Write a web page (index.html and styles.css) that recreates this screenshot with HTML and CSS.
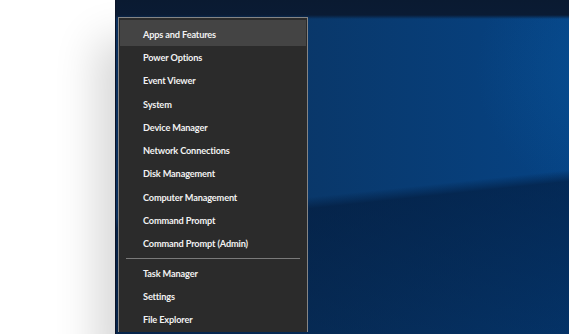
FILE: index.html
```html
<!DOCTYPE html>
<html lang="en">

<head>
    <meta charset="UTF-8">
    <meta name="viewport" content="width=device-width, initial-scale=1.0">
    <title>Quick Link Menu</title>
    <link rel="stylesheet" href="styles.css">
</head>

<body>
<div class="page">
    <!-- white area left of the screen -->
    <div class="gutter"></div>

    <!-- desktop with the Win+X menu -->
    <div class="desktop">
        <div class="menu">
            <ul class="group">
                <li class="item active">Apps and Features</li>
                <li class="item">Power Options</li>
                <li class="item">Event Viewer</li>
                <li class="item">System</li>
                <li class="item">Device Manager</li>
                <li class="item">Network Connections</li>
                <li class="item">Disk Management</li>
                <li class="item">Computer Management</li>
                <li class="item">Command Prompt</li>
                <li class="item">Command Prompt (Admin)</li>
            </ul>
            <div class="separator"></div>
            <ul class="group">
                <li class="item">Task Manager</li>
                <li class="item">Settings</li>
                <li class="item">File Explorer</li>
            </ul>
        </div>
    </div>
</div>
</body>

</html>
```

FILE: styles.css
```css
/* Basic page setup */
body {
    margin: 0;
    background-color: #fff;
    font-family: Lato, "Open Sans", sans-serif;
    overflow: hidden;
}

.page {
    display: flex;
    height: 334px;
}

.gutter {
    width: 115px;
    flex-shrink: 0;
}

.desktop {
    flex: 1;
    display: flex;
    align-items: flex-start;
    padding: 17px 0 0 2px;
    border-left: 1px solid #0b1428;
    background:
        linear-gradient(to bottom, #0a1a31 0px, #0a1b34 15px, rgba(10, 27, 52, 0) 19px),
        linear-gradient(174deg, rgba(0, 0, 0, 0) 0%, rgba(0, 0, 0, 0) 57%, rgba(2, 20, 48, 0.55) 60%, rgba(2, 20, 48, 0.35) 100%),
        radial-gradient(ellipse 160px 140px at 520px 70px, rgba(10, 90, 160, 0.5), rgba(10, 90, 160, 0)),
        linear-gradient(to right, #0a2f5c 0%, #09386b 45%, #064384 100%);
    box-shadow: -18px 40px 40px rgba(0, 0, 0, 0.16);
}

/* The menu itself */
.menu {
    width: 188px;
    background-color: #2b2b2b;
    border: 1px solid #858585;
    border-bottom: none;
    padding-top: 2px;
}

.group {
    list-style: none;
    margin: 0;
    padding: 0;
}

.item {
    height: 23.3px;
    line-height: 23.3px;
    padding-left: 24px;
    font-size: 9.2px;
    font-weight: 700;
    color: #f2f2f2;
    white-space: nowrap;
    letter-spacing: -0.15px;
}

.item.active {
    height: 26px;
    line-height: 29px;
    margin: 0 1px;
    padding-left: 23px;
    background-color: #444;
}

.separator {
    height: 1px;
    margin: 2px 7px 3px 7px;
    background-color: #7a7a7a;
}
```
